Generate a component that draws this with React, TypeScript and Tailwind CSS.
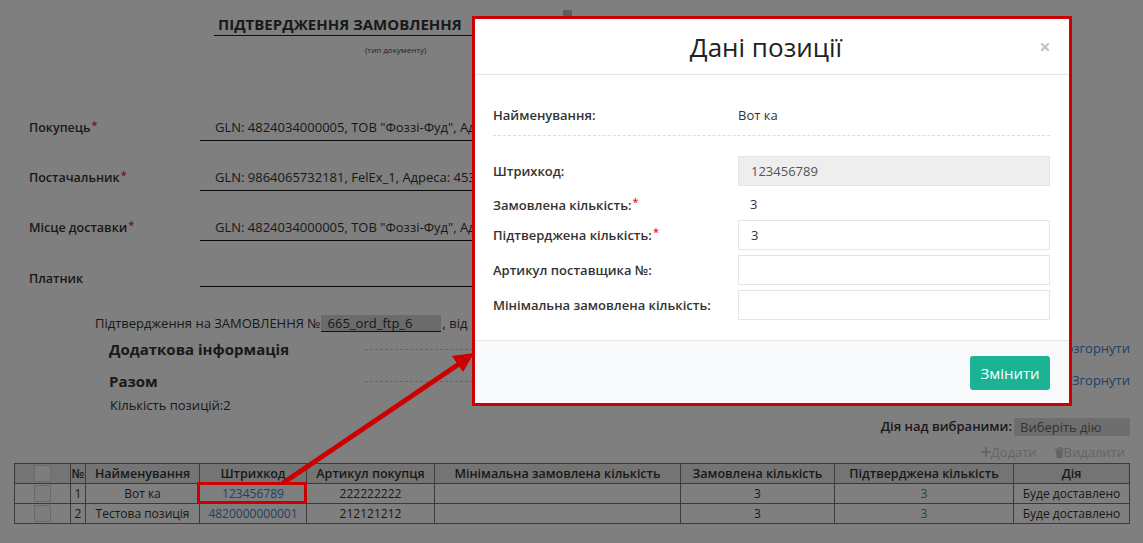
import React from "react";

const link = "text-[#3d84c6]";

function Req() {
  return <span className="ml-[1px] inline-block align-top text-[11px] leading-[11px] text-[#e0261e]">*</span>;
}

const cols = [56, 15, 114, 107, 128, 246, 154, 179, 116];
const heads = ["", "№", "Найменування", "Штрихкод", "Артикул покупця", "Мінімальна замовлена кількість", "Замовлена кількість", "Підтверджена кількість", "Дія"];
const rows = [
  { n: "1", name: "Вот ка", code: "123456789", art: "222222222" },
  { n: "2", name: "Тестова позиція", code: "4820000000001", art: "212121212" },
];

function Box() {
  return <div className="mx-auto h-[17px] w-[17px] border border-[#d5d5d5] bg-[#fafafa]" />;
}

function FormRow({ label, req, value }: { label: string; req?: boolean; value: string }) {
  return (
    <div className="flex h-[27px]">
      <div className="w-[200px] pl-[29px] pt-[5px] text-[12.5px] font-semibold leading-[17px]">
        {label}
        {req && <Req />}
      </div>
      <div className="w-[720px] whitespace-nowrap overflow-hidden border-b border-[#111] pl-[15px] leading-[26px]">{value}</div>
    </div>
  );
}

function ModalRow({ label, req, children, mt }: { label: string; req?: boolean; children: React.ReactNode; mt: string }) {
  return (
    <div className={`flex h-[30px] items-center ${mt}`}>
      <div className="w-[245px] font-semibold leading-[18px]">
        {label}
        {req && <Req />}
      </div>
      {children}
    </div>
  );
}

export default function App() {
  return (
    <div className="relative h-[543px] w-[1143px] overflow-hidden bg-white font-['Open_Sans','Noto_Sans',sans-serif] text-[13px] text-[#333]">
      {/* document header */}
      <div className="flex pt-[14px]">
        <div className="ml-[214px] h-[22px] w-[300px] border-b border-[#222] pl-[4px] text-[15px] font-bold leading-[20px]">
          ПІДТВЕРДЖЕННЯ ЗАМОВЛЕННЯ
        </div>
        <div className="ml-[49px] -mt-[4px] h-[9px] w-[9px] bg-[#bbb]" />
      </div>
      <div className="ml-[365px] mt-[9px] text-[8px] leading-[10px] text-[#444]">(тип документу)</div>

      <div className="mt-[59px]">
        <FormRow label="Покупець" req value={'GLN: 4824034000005, ТОВ "Фоззі-Фуд", Адреса'} />
      </div>
      <div className="mt-[23px]">
        <FormRow label="Постачальник" req value="GLN: 9864065732181, FelEx_1, Адреса: 453278" />
      </div>
      <div className="mt-[23px]">
        <FormRow label="Місце доставки" req value={'GLN: 4824034000005, ТОВ "Фоззі-Фуд", Адреса'} />
      </div>
      <div className="mt-[24px] flex">
        <div className="h-[27px] w-[200px] pl-[29px] text-[12.5px] font-semibold leading-[27px]">Платник</div>
        <div className="h-[22px] w-[720px] border-b border-[#111]" />
      </div>

      {/* order ref */}
      <div className="mt-[23px] flex h-[17px] items-stretch pl-[95px] leading-[17px]">
        <span>Підтвердження на ЗАМОВЛЕННЯ №</span>
        <div className="w-[120px] border-b border-[#222] bg-[#d6d6d6] pl-[7px] leading-[16px] text-[#333]">665_ord_ftp_6</div>
        <span className="ml-[2px]">, від</span>
        <div className="ml-[4px] w-[200px] border-b border-[#222] bg-[#d6d6d6] pl-[7px] leading-[16px]">1</div>
      </div>

      <div className="mt-[7px] flex h-[20px] items-center pl-[109px] pr-[13px]">
        <div className="w-[256px] text-[15px] font-bold">Додаткова інформація</div>
        <div className="mr-[4px] flex-1 border-t border-dashed border-[#ccc]" />
        <span className={link}>Розгорнути</span>
      </div>
      <div className="mt-[12px] flex h-[20px] items-center pl-[109px] pr-[13px]">
        <div className="w-[256px] text-[15px] font-bold">Разом</div>
        <div className="mr-[4px] flex-1 border-t border-dashed border-[#ccc]" />
        <svg width="8" height="8" viewBox="0 0 8 8" className="mr-[3px] text-[#3d84c6]">
          <path d="M1 6 L4 2.5 L7 6" stroke="currentColor" strokeWidth="1.6" fill="none" />
        </svg>
        <span className={link}>Згорнути</span>
      </div>
      <div className="mt-[5px] h-[18px] pl-[110px] leading-[18px]">Кількість позицій:2</div>

      <div className="mt-[4px] flex h-[18px] items-center justify-end pr-[13px]">
        <span className="mr-[2px] font-semibold">Дія над вибраними:</span>
        <div className="h-[18px] w-[116px] bg-[#ddd] pl-[6px] leading-[18px] text-[#666]">Виберіть дію</div>
      </div>
      <div className="mt-[8px] flex h-[16px] items-center justify-end gap-[18px] pr-[18px] leading-[16px] text-[#c8c8c8]">
        <span className="flex items-center">
          <svg width="10" height="10" viewBox="0 0 10 10">
            <path d="M4 0h2v4h4v2H6v4H4V6H0V4h4z" fill="currentColor" />
          </svg>
          Додати
        </span>
        <span className="flex items-center">
          <svg width="9" height="11" viewBox="0 0 9 11">
            <path d="M0 1.5h9v1.3H0zM3 0h3v1.5H3zM1 3.2h7l-.6 7.8H1.6z" fill="currentColor" />
          </svg>
          Видалити
        </span>
      </div>

      {/* positions table */}
      <table className="ml-[14px] mt-[3px] w-[1115px] table-fixed border-collapse text-[12px]">
        <colgroup>
          {cols.map((w, i) => (
            <col key={i} style={{ width: w }} />
          ))}
        </colgroup>
        <thead>
          <tr className="bg-[#e9e9e9]">
            {heads.map((h, i) => (
              <th key={i} className="h-[20px] border border-[#777] p-0 text-center text-[12.5px] font-semibold leading-[18px]">
                {i === 0 ? <Box /> : h}
              </th>
            ))}
          </tr>
        </thead>
        <tbody>
          {rows.map((r) => (
            <tr key={r.n}>
              <td className="h-[20px] border border-[#777] p-0"><Box /></td>
              <td className="border border-[#777] p-0 text-center leading-[18px] text-[#333]">{r.n}</td>
              <td className="border border-[#777] p-0 text-center leading-[18px]">{r.name}</td>
              <td className={`border border-[#777] p-0 text-center leading-[18px] ${link}`}>{r.code}</td>
              <td className="border border-[#777] p-0 text-center leading-[18px]">{r.art}</td>
              <td className="border border-[#777] p-0" />
              <td className="border border-[#777] p-0 text-center leading-[18px]">3</td>
              <td className={`border border-[#777] p-0 text-center leading-[18px] ${link}`}>3</td>
              <td className="border border-[#777] p-0 text-center leading-[18px]">Буде доставлено</td>
            </tr>
          ))}
        </tbody>
      </table>

      {/* backdrop */}
      <div className="absolute inset-0 bg-black/50" />

      {/* modal */}
      <div className="absolute left-[472px] top-[16px] w-[600px] border-[3px] border-[#cc0000] bg-white">
        <div className="flex h-[56px] items-center border-b border-[#e5e5e5]">
          <div className="flex-1 pl-[36px] text-center text-[26px] leading-[30px] text-[#222]">Дані позиції</div>
          <div className="w-[48px] text-center text-[20px] font-bold leading-[20px] text-[#c4c4c4]">×</div>
        </div>
        <div className="pb-[20px] pl-[18px] pr-[19px] pt-[31px]">
          <div className="flex h-[20px] items-center">
            <div className="w-[245px] font-semibold">Найменування:</div>
            <div>Вот ка</div>
          </div>
          <div className="mt-[9px] border-t border-dashed border-[#ddd]" />
          <ModalRow label="Штрихкод:" mt="mt-[20px]">
            <div className="h-[30px] flex-1 border border-[#e5e5e5] bg-[#eee] pl-[12px] leading-[28px] text-[#555]">123456789</div>
          </ModalRow>
          <ModalRow label="Замовлена кількість:" req mt="mt-[4px]">
            <div className="pl-[12px]">3</div>
          </ModalRow>
          <ModalRow label="Підтверджена кількість:" req mt="mt-0">
            <div className="h-[30px] flex-1 border border-[#e5e5e5] pl-[12px] leading-[28px]">3</div>
          </ModalRow>
          <ModalRow label="Артикул поставщика №:" mt="mt-[5px]">
            <div className="h-[30px] flex-1 border border-[#e5e5e5]" />
          </ModalRow>
          <ModalRow label="Мінімальна замовлена кількість:" mt="mt-[5px]">
            <div className="h-[30px] flex-1 border border-[#e5e5e5]" />
          </ModalRow>
        </div>
        <div className="flex h-[63px] justify-end border-t border-[#e5e5e5] bg-[#f8f9fa] pr-[19px] pt-[15px]">
          <div className="h-[34px] w-[80px] rounded-[3px] bg-[#1ab394] text-center text-[15px] leading-[34px] text-white">Змінити</div>
        </div>
      </div>

      {/* annotation: box + arrow */}
      <div className="absolute left-[197px] top-[482px] h-[22px] w-[110px] border-[3px] border-[#cc0000]" />
      <svg className="pointer-events-none absolute left-0 top-0" width="1143" height="543">
        <line x1="283" y1="483" x2="459" y2="364" stroke="#cc0000" strokeWidth="5" />
        <polygon points="474,353 452,356 463,372" fill="#cc0000" />
      </svg>
    </div>
  );
}
